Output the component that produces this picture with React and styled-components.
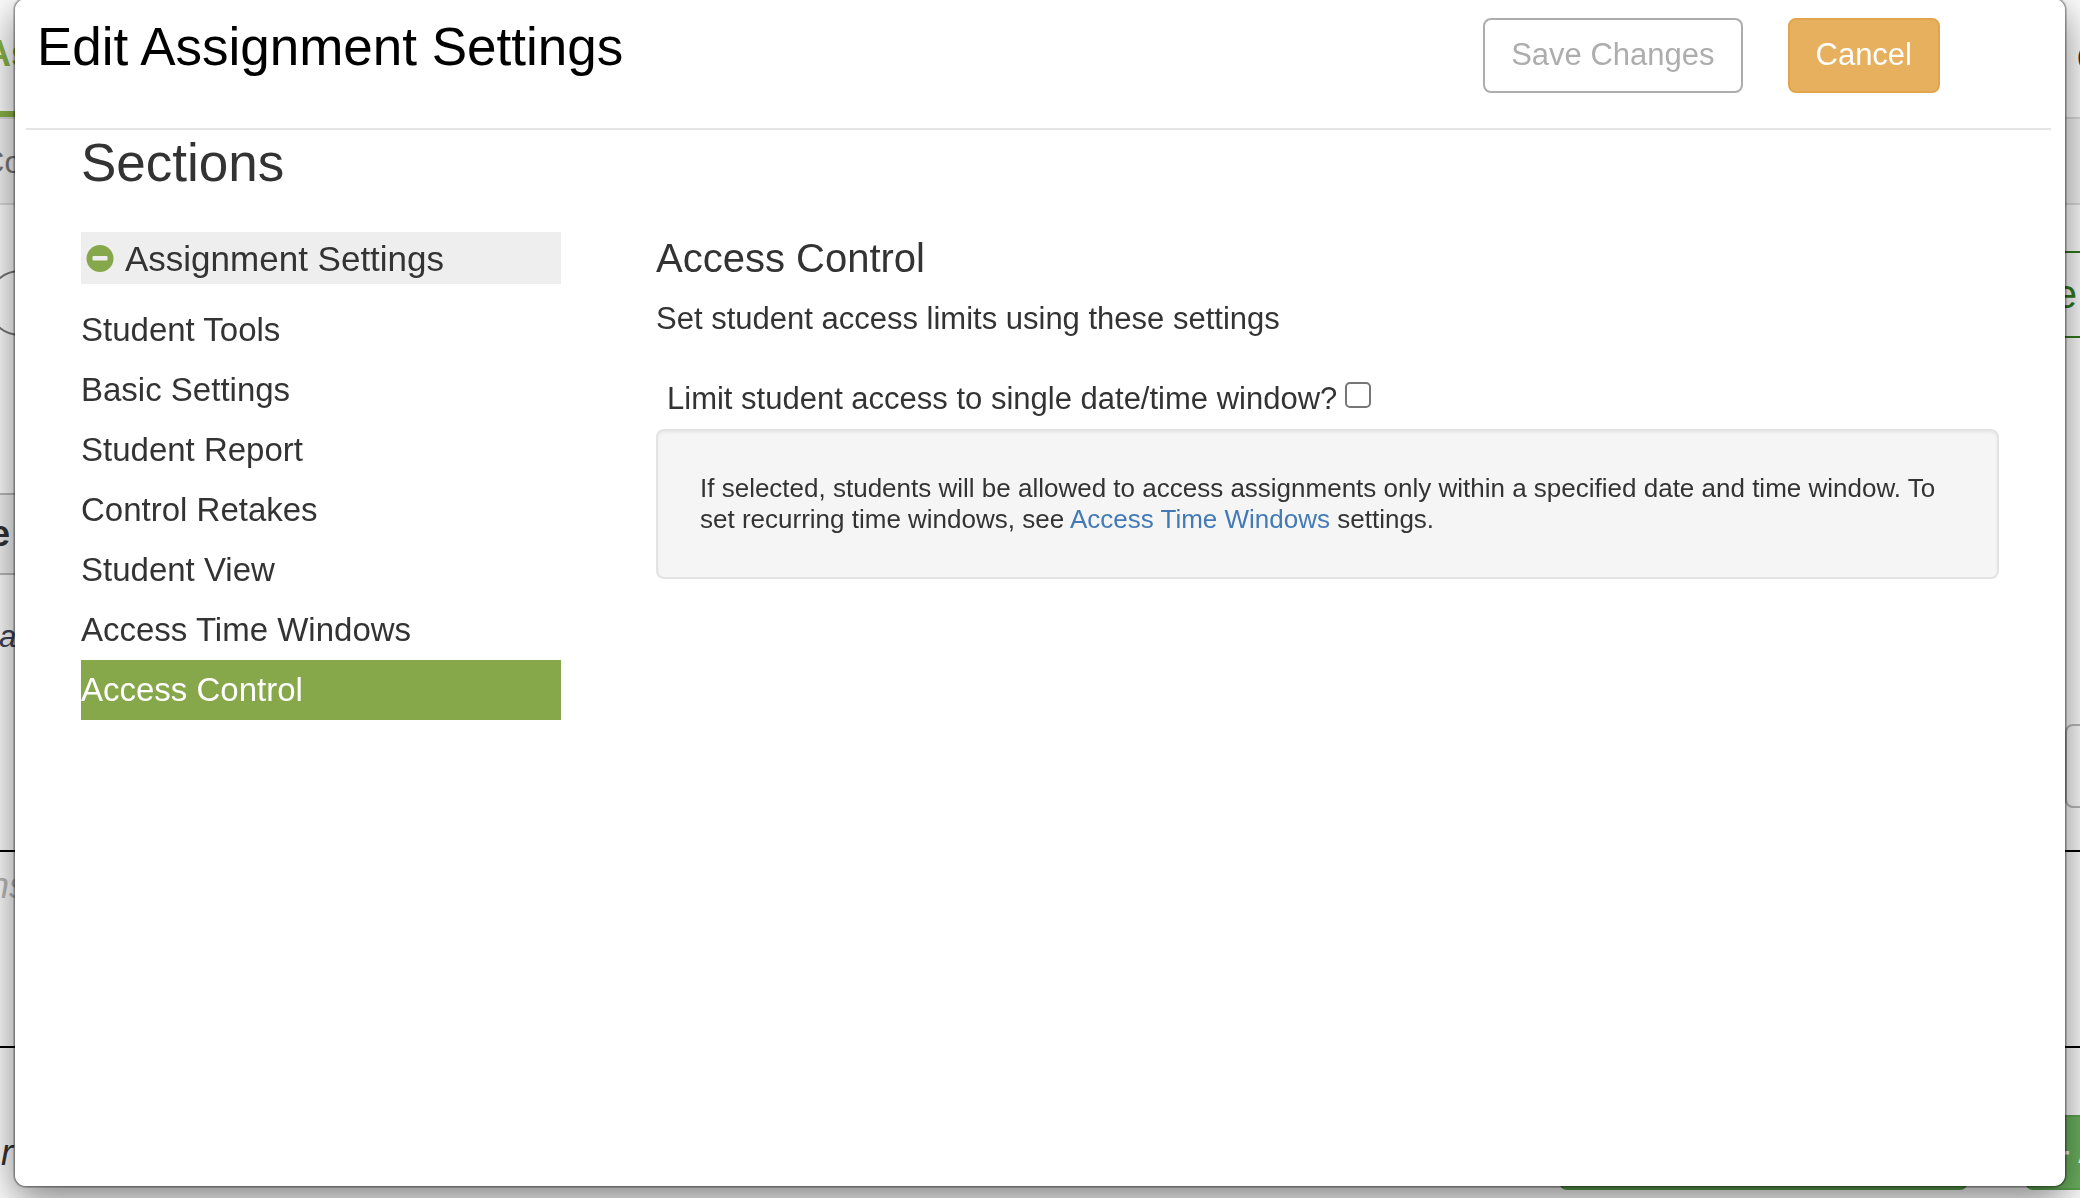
import React, { useState } from 'react'
import styled, { createGlobalStyle } from 'styled-components'

const GlobalStyle = createGlobalStyle`
  * {
    box-sizing: border-box;
  }

  body {
    margin: 0;
    overflow: hidden;
    background: #fff;
    color: #333;
    font-family: 'Liberation Sans', Arial, sans-serif;
  }
`

/* page behind the dialog, runs past both edges of the window */

const Page = styled.div`
  margin: 0 -40px;
  height: 100vh;
  overflow: hidden;
`

const Band = styled.div`
  display: flex;
  justify-content: space-between;
  align-items: ${({ $align }) => $align || 'center'};
  height: ${({ $height }) => $height}px;
  padding-top: ${({ $top }) => $top || 0}px;
  background: ${({ $background }) => $background || 'transparent'};
  border: 0 solid ${({ $line }) => $line || 'transparent'};
  border-bottom-width: ${({ $line }) => ($line ? '2px' : '0')};
  border-top-width: ${({ $boxed }) => ($boxed ? '2px' : '0')};
`

const Label = styled.span`
  padding: 0 ${({ $right }) => $right || 0}px 0 ${({ $left }) => $left || 0}px;
  color: ${({ color }) => color || '#333'};
  font-size: ${({ $size }) => $size || 36}px;
  font-weight: ${({ $bold }) => ($bold ? 'bold' : 'normal')};
  font-style: ${({ $italic }) => ($italic ? 'italic' : 'normal')};
  line-height: 44px;
`

const Tab = styled.div`
  display: flex;
  align-items: center;
  align-self: stretch;
  width: 240px;
  padding-bottom: 4px;
  border-bottom: 6px solid #8ab446;
`

const Pill = styled.div`
  width: 240px;
  height: 66px;
  margin: 16px 0 0 27px;
  border: 2px solid #777;
  border-radius: 33px;
`

const OutlineButton = styled.button`
  width: 240px;
  height: 87px;
  padding: 0 41px 0 0;
  border: 2px solid #2f7a1c;
  background: transparent;
  color: #2f7a1c;
  font-family: inherit;
  font-size: 40px;
  text-align: right;
`

const PanelHead = styled.div`
  display: flex;
  align-items: center;
  width: 240px;
  height: 82px;
  border: 2px solid #bbb;
  border-width: 2px 0;
  background: #f5f5f5;
`

const SelectBox = styled.div`
  width: 55px;
  height: 84px;
  margin-left: auto;
  border: 2px solid #bbb;
  border-radius: 8px;
`

const PageActions = styled.div`
  display: flex;
  gap: 57px;
  margin-left: auto;
`

const GreenButton = styled.button`
  width: ${({ $width }) => $width}px;
  height: 75px;
  padding: 0 0 0 25px;
  border: 2px solid #5ba54e;
  border-radius: 8px;
  background: #6cb35f;
  color: #fff;
  font-family: inherit;
  font-size: 31px;
  font-weight: bold;
  text-align: left;
  white-space: nowrap;
`

/* dialog */

const Overlay = styled.div`
  position: fixed;
  inset: -2px 0 11px;
  display: flex;
  padding: 0 14px;
`

const Modal = styled.section`
  flex: 1;
  border: 1px solid rgba(0, 0, 0, 0.2);
  border-radius: 12px;
  background: #fff;
  background-clip: padding-box;
  box-shadow: 0 0 0 1px rgba(0, 0, 0, 0.2), 0 13px 40px rgba(0, 0, 0, 0.5);
`

const Header = styled.header`
  display: flex;
  justify-content: space-between;
  align-items: flex-start;
  margin: 0 14px 0 11px;
  padding: 19px 111px 35px 11px;
  border-bottom: 2px solid #e5e5e5;
`

const Title = styled.h1`
  margin: 0;
  color: #000;
  font-size: 53px;
  font-weight: normal;
  line-height: 58px;
`

const Actions = styled.div`
  display: flex;
  gap: 45px;
`

const Button = styled.button`
  height: 75px;
  padding: 0 26px 2px;
  border: 2px solid ${({ $border }) => $border};
  border-radius: 8px;
  background: ${({ $background }) => $background};
  color: ${({ color }) => color};
  font-family: inherit;
  font-size: 31px;
  cursor: pointer;

  &:disabled {
    cursor: not-allowed;
  }
`

const Body = styled.div`
  padding: 4px 66px 0;
`

const SectionsTitle = styled.h2`
  margin: 0 0 40px;
  font-size: 53px;
  font-weight: normal;
  line-height: 58px;
`

const Columns = styled.div`
  display: grid;
  grid-template-columns: 480px 1fr;
  gap: 95px;
`

const GroupButton = styled.button`
  display: flex;
  align-items: center;
  gap: 11px;
  width: 100%;
  height: 52px;
  margin-bottom: 16px;
  padding: 2px 5px 0;
  border: 0;
  background: #eee;
  color: #333;
  font-family: inherit;
  font-size: 35px;
  line-height: 50px;
  cursor: pointer;
`

const List = styled.ul`
  margin: 0;
  padding: 0;
  list-style: none;
`

const Item = styled.a`
  display: block;
  background: ${({ $active }) => ($active ? '#86a74a' : 'transparent')};
  color: ${({ $active }) => ($active ? '#fff' : '#333')};
  font-size: 33px;
  line-height: 60px;
  text-decoration: none;
`

const Content = styled.div`
  padding-top: 4px;
`

const ContentTitle = styled.h3`
  margin: 0 0 17px;
  font-size: 40px;
  font-weight: normal;
  line-height: 44px;
`

const Text = styled.p`
  margin: 0 0 36px;
  font-size: 31px;
  line-height: 44px;
`

const Field = styled.div`
  display: flex;
  align-items: center;
  gap: 8px;
  margin-bottom: 8px;
  padding-left: 11px;
  font-size: 31px;
  line-height: 44px;
`

const Checkbox = styled.input`
  appearance: none;
  width: 26px;
  height: 26px;
  margin: 0 0 8px;
  border: 2px solid #767676;
  border-radius: 5px;
  background: #fff;

  &:checked {
    background: #86a74a;
  }
`

const Well = styled.div`
  padding: 42px;
  border: 2px solid #e3e3e3;
  border-radius: 8px;
  background: #f5f5f5;
  box-shadow: inset 0 2px 3px rgba(0, 0, 0, 0.05);
  font-size: 26px;
  line-height: 31px;
`

const Link = styled.a`
  color: #427ab8;
  text-decoration: none;
`

const sections = [
  'Student Tools',
  'Basic Settings',
  'Student Report',
  'Control Retakes',
  'Student View',
  'Access Time Windows',
  'Access Control'
]

const MinusIcon = () => (
  <svg width="28" height="28" viewBox="0 0 28 28" aria-hidden="true">
    <circle cx="14" cy="13.5" r="13.5" fill="#86a74a" />
    <rect x="6.5" y="11" width="15" height="4.6" rx="1" fill="#eee" />
  </svg>
)

const Background = () => (
  <Page aria-hidden="true">
    <Band $height={119} $line="#ddd">
      <Tab>
        <Label $left={25} $bold color="#8ab446">
          As
        </Label>
      </Tab>
      <Label $right={17} $bold>
        C
      </Label>
    </Band>
    <Band $height={86} $top={4} $background="#f5f5f5" $line="#ddd">
      <Label $left={22} $size={31} color="#777">
        Co
      </Label>
    </Band>
    <Band $height={179}>
      <Pill />
      <OutlineButton>e</OutlineButton>
    </Band>
    <Band $height={191} $align="flex-end">
      <PanelHead>
        <Label $left={30} $bold>
          e
        </Label>
      </PanelHead>
    </Band>
    <Band $height={149} $top={40} $align="flex-start">
      <Label $left={39} $size={31} $italic color="#3c4257">
        a
      </Label>
    </Band>
    <Band $height={126} $align="flex-start">
      <SelectBox />
    </Band>
    <Band $height={198} $top={12} $boxed $line="#000" $align="flex-start">
      <Label $left={29} $italic color="#bbb">
        ns
      </Label>
    </Band>
    <Band $height={142} $top={67}>
      <Label $left={41} $italic>
        r
      </Label>
      <PageActions>
        <GreenButton $width={409} />
        <GreenButton $width={95}>+ A</GreenButton>
      </PageActions>
    </Band>
  </Page>
)

const App = () => {
  const [active, setActive] = useState('Access Control')
  const [open, setOpen] = useState(true)
  const [limited, setLimited] = useState(false)

  const handleSelect = name => e => {
    e.preventDefault()
    setActive(name)
  }

  return (
    <>
      <GlobalStyle />
      <Background />
      <Overlay>
        <Modal role="dialog" aria-labelledby="dialog-title">
          <Header>
            <Title id="dialog-title">Edit Assignment Settings</Title>
            <Actions>
              <Button
                disabled={!limited}
                $border="#adadad"
                $background="#fff"
                color="#adadad"
              >
                Save Changes
              </Button>
              <Button $border="#e2a54c" $background="#e6b05f" color="#fff">
                Cancel
              </Button>
            </Actions>
          </Header>
          <Body>
            <SectionsTitle>Sections</SectionsTitle>
            <Columns>
              <nav>
                <GroupButton
                  aria-expanded={open}
                  onClick={() => setOpen(!open)}
                >
                  <MinusIcon />
                  Assignment Settings
                </GroupButton>
                {open && (
                  <List>
                    {sections.map(name => (
                      <li key={name}>
                        <Item
                          href="#"
                          $active={name === active}
                          onClick={handleSelect(name)}
                        >
                          {name}
                        </Item>
                      </li>
                    ))}
                  </List>
                )}
              </nav>
              <Content>
                <ContentTitle>Access Control</ContentTitle>
                <Text>Set student access limits using these settings</Text>
                <Field>
                  <label htmlFor="limit-access">
                    Limit student access to single date/time window?
                  </label>
                  <Checkbox
                    id="limit-access"
                    type="checkbox"
                    checked={limited}
                    onChange={e => setLimited(e.target.checked)}
                  />
                </Field>
                <Well>
                  If selected, students will be allowed to access assignments
                  only within a specified date and time window. To set recurring
                  time windows, see{' '}
                  <Link href="#" onClick={handleSelect('Access Time Windows')}>
                    Access Time Windows
                  </Link>{' '}
                  settings.
                </Well>
              </Content>
            </Columns>
          </Body>
        </Modal>
      </Overlay>
    </>
  )
}

export default App
